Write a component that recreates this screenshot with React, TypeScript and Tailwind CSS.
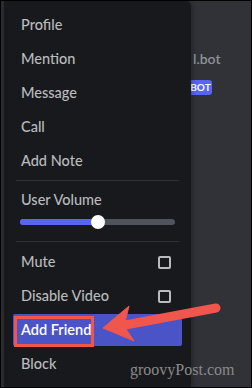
import React from "react";

const font = { fontFamily: "Lato, 'Noto Sans', sans-serif" };

function Item({ label, right }: { label: string; right?: React.ReactNode }) {
  return (
    <div className="h-[32px] mb-[2px] flex items-center justify-between pl-[8px] pr-[11px] rounded-[2px] text-[14.5px] font-medium text-[#b9bbbe]">
      <span>{label}</span>
      {right}
    </div>
  );
}

function Check() {
  return <div className="w-[13px] h-[13px] rounded-[2px] border-[2px] border-[#b9bbbe]" />;
}

export default function App() {
  return (
    <div className="w-[252px] h-[388px] bg-black p-[1px] relative overflow-hidden" style={font}>
      <div className="w-full h-full flex bg-[#303237] overflow-hidden">
        <div className="w-[3px] bg-[#2b2d31]" />
        <div className="relative z-10 w-[187px] h-full bg-[#18191c] rounded-tr-[5px] px-[9px] pt-[8px] shadow-[2px_0_4px_rgba(0,0,0,0.25)]">
          <Item label="Profile" />
          <Item label="Mention" />
          <Item label="Message" />
          <Item label="Call" />
          <Item label="Add Note" />
          <div className="mt-[3px] mx-[3px] h-px bg-[#2e3035]" />
          <div className="pl-[8px] pr-[8px] pt-[9px] text-[14.5px] font-medium text-[#b9bbbe] leading-[20px]">User Volume</div>
          <div className="relative h-[24px] mx-[7px] flex items-center">
            <div className="w-full h-[6px] rounded-full bg-[#4f545c] relative">
              <div className="absolute left-0 top-0 h-full w-[78px] rounded-full bg-[#5865f2]" />
              <div className="absolute left-[71px] top-[-4px] w-[14px] h-[14px] rounded-full bg-white" />
            </div>
          </div>
          <div className="mt-[7px] mx-[3px] h-px bg-[#2e3035]" />
          <div className="h-[4px]" />
          <Item label="Mute" right={<Check />} />
          <Item label="Disable Video" right={<Check />} />
          <div className="h-[32px] mb-[2px] flex items-center pl-[8px] rounded-[2px] bg-[#4b54c6] text-[14.5px] text-white font-semibold">
            Add Friend
          </div>
          <Item label="Block" />
        </div>
        <div className="flex-1 relative">
          <div className="pl-[2px] pt-[48px] text-[14px] font-semibold text-[#8e9297] leading-[20px] whitespace-nowrap">l.bot</div>
          <div className="ml-[-2px] mt-[11px] w-[23px] h-[15px] rounded-[3px] bg-[#5865f2] text-white text-[10px] font-bold flex items-center justify-center">BOT</div>
        </div>
      </div>
      <div className="absolute z-20 left-[14px] top-[316px] w-[80px] h-[31px] border-[3px] border-[#f0564c]" />
      <svg className="absolute z-20 left-0 top-0" width="252" height="388" viewBox="0 0 252 388">
        <line x1="120" y1="326" x2="216" y2="308" stroke="#f0564c" strokeWidth="9" strokeLinecap="round" />
        <path d="M103 328 L129 306 L124 326 L134 341 Z" fill="#f0564c" strokeLinejoin="round" stroke="#f0564c" strokeWidth="1" />
      </svg>
      <div className="absolute z-20 left-[130px] top-[360px] text-[16px] text-[#8a8a8a] leading-[20px]" style={{ fontFamily: "'Liberation Serif', serif" }}>
        groovyPost.com
      </div>
    </div>
  );
}
